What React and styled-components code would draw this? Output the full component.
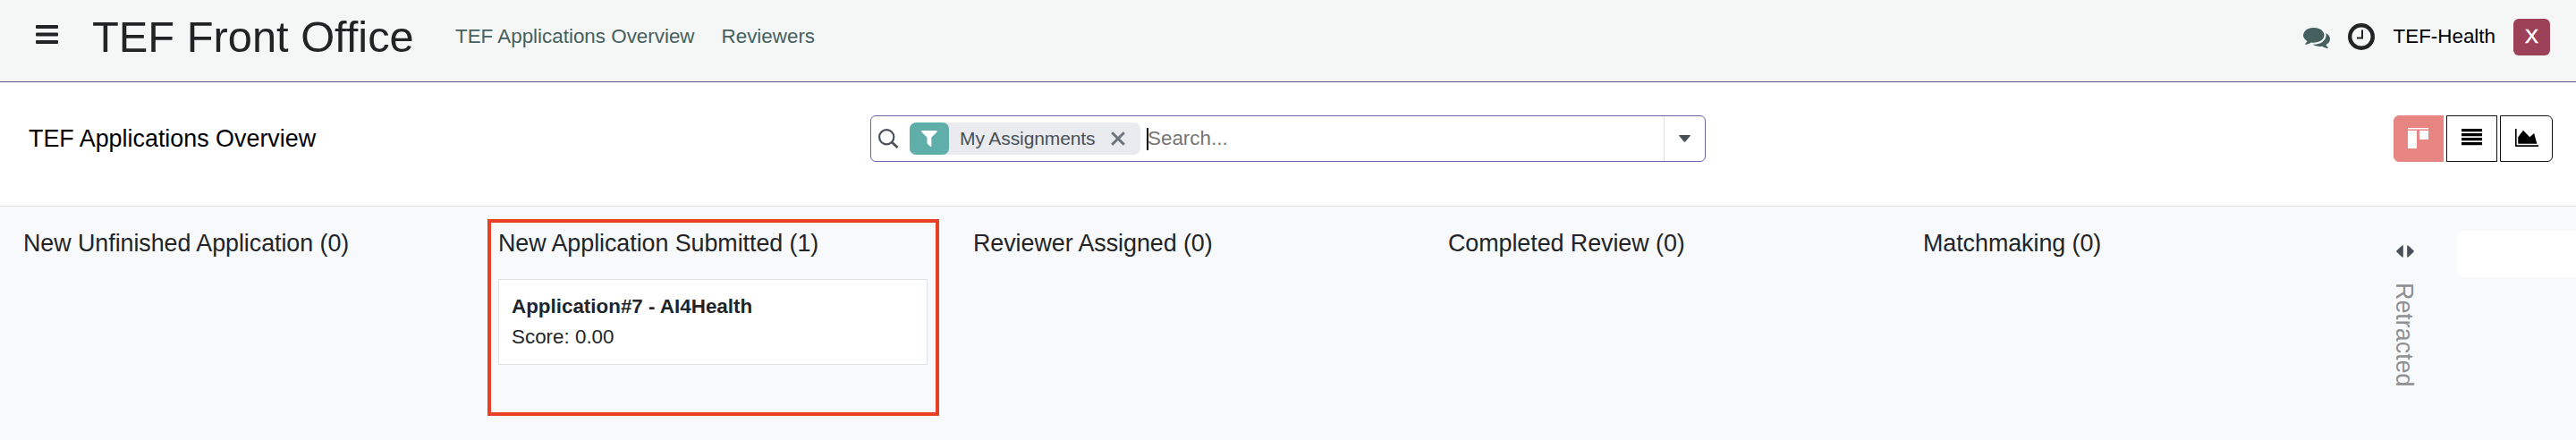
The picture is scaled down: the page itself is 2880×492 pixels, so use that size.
import React from "react";
import styled, { createGlobalStyle, css } from "styled-components";

const GlobalStyle = createGlobalStyle`
  *, *::before, *::after { box-sizing: border-box; }
  html, body { margin: 0; padding: 0; }
  body {
    background: #f8f9fb;
    font-family: "Liberation Sans", Arial, sans-serif;
    font-size: 22.4px;
    line-height: 34px;
    color: #212529;
    overflow: hidden;
    -webkit-font-smoothing: antialiased;
  }
`;

const Page = styled.div`
  display: flex;
  flex-direction: column;
  width: 2880px;
  height: 492px;
  overflow: hidden;
  white-space: nowrap;
`;

const Icon = styled.svg`
  display: block;
  flex: none;
  width: ${(p) => p.$w}px;
  height: ${(p) => p.$h}px;
  fill: currentColor;
`;

const NavBar = styled.header`
  display: flex;
  align-items: flex-start;
  height: 92px;
  padding: 0 29px 0 40px;
  background: #f4f7f6;
  border-bottom: 1px solid #5b5184;
`;

const MenuToggle = styled.div`
  margin-top: 28px;
  color: #212424;
`;

const Brand = styled.div`
  flex: none;
  margin: 12px 0 0 38px;
  width: 406px;
  font-size: 48.8px;
  line-height: 58px;
  color: #212424;
`;

const NavLinks = styled.nav`
  display: flex;
  gap: 30px;
  margin-top: 24px;
  color: #466060;
`;

const NavLink = styled.span``;

const SysTray = styled.div`
  display: flex;
  margin-left: auto;
`;

const TrayItem = styled.div`
  margin: ${(p) => p.$top}px ${(p) => p.$right}px 0 0;
  color: ${(p) => p.$color};
`;

const Avatar = styled.div`
  width: 41px;
  height: 41px;
  margin-top: 21px;
  border-radius: 6px;
  background: #9d4159;
  color: #fff;
  line-height: 40px;
  text-align: center;
  -webkit-text-stroke: 0.5px #fff;
`;

const ControlPanel = styled.section`
  display: flex;
  align-items: flex-start;
  height: 139px;
  padding: 37px 26px 0 32px;
  background: #fff;
  border-bottom: 1px solid #dee2e6;
`;

const Breadcrumb = styled.div`
  width: 941px;
  margin-top: 9px;
  font-size: 26.88px;
  color: #000;
`;

const SearchBox = styled.div`
  display: flex;
  align-items: center;
  width: 934px;
  height: 52px;
  padding-left: 8px;
  border: 1px solid #71639e;
  border-radius: 6px;
  color: #495057;
`;

const Facet = styled.div`
  display: flex;
  align-items: center;
  width: 258px;
  height: 36px;
  margin: 0 7px 0 12px;
  border-radius: 7px;
  background: #e9ebef;
`;

const FacetIcon = styled.div`
  display: flex;
  align-items: center;
  justify-content: center;
  width: 44px;
  height: 36px;
  border-radius: 7px;
  background: #60aeaa;
  color: #fff;
`;

const FacetLabel = styled.span`
  flex: none;
  width: 181px;
  padding-left: 12px;
  font-size: 21px;
  letter-spacing: -0.1px;
`;

const Remove = styled.span`
  color: #6c757d;
`;

const SearchInput = styled.div`
  flex: 1;
  display: flex;
  align-items: center;
  color: #757575;
`;

const TextCursor = styled.span`
  width: 2px;
  height: 25px;
  margin-right: -1px;
  background: #000;
`;

const SearchToggle = styled.div`
  display: flex;
  align-items: center;
  justify-content: center;
  width: 46px;
  height: 50px;
  border-left: 1px solid #dee2e6;
`;

const ViewSwitch = styled.div`
  display: flex;
  gap: 3px;
  margin-left: auto;
`;

const ViewButton = styled.div`
  display: flex;
  align-items: center;
  justify-content: center;
  width: ${(p) => p.$w}px;
  height: 52px;
  padding-bottom: 2px;
  border: 1px solid #111;
  border-radius: ${(p) => p.$radius || "0"};
  color: #000;
  background: #fff;
  ${(p) => p.$active && css`
    padding: 0 1px 1px 0;
    background: #e78583;
    border-color: #e78583;
    color: #fff;
  `}
`;

const Board = styled.main`
  flex: 1;
  display: flex;
  align-items: flex-start;
  padding: 14px 0 0 14px;
  background: #f8f9fb;
`;

const Column = styled.section`
  width: 505px;
  height: 220px;
  margin-right: 26px;
  padding: 6px 8px 0;
  border: 4px solid ${(p) => (p.$marked ? "#ea4025" : "transparent")};
`;

const ColumnTitle = styled.div`
  height: 57px;
  font-size: 26.88px;
  line-height: 34px;
  letter-spacing: -0.06px;
`;

const Card = styled.article`
  width: 480px;
  height: 96px;
  padding: 13px 14px;
  background: #fff;
  border: 1px solid #dee2e6;
`;

const CardTitle = styled.div`
  font-weight: 700;
`;

const CardText = styled.div``;

const FoldedColumn = styled.section`
  display: flex;
  flex-direction: column;
  align-items: center;
  gap: 28px;
  width: 40px;
  padding-top: 29px;
  color: #495057;
`;

const FoldedTitle = styled.div`
  margin-right: 3px;
  writing-mode: vertical-rl;
  font-size: 26.88px;
  line-height: 30px;
  color: #8f9091;
`;

const AddColumn = styled.div`
  flex: 1;
  height: 52px;
  margin: 13px 0 0 38px;
  background: #fff;
  border-radius: 7px 0 0 7px;
`;

const columns = [
  { title: "New Unfinished Application (0)" },
  {
    title: "New Application Submitted (1)",
    marked: true,
    card: { title: "Application#7 - AI4Health", text: "Score: 0.00" },
  },
  { title: "Reviewer Assigned (0)" },
  { title: "Completed Review (0)" },
  { title: "Matchmaking (0)" },
];

export default function App() {
  return (
    <>
      <GlobalStyle />
      <Page>
        <NavBar>
          <MenuToggle>
            <Icon $w={25} $h={21} viewBox="0 0 25 21">
              <rect width="25" height="4" rx="1" />
              <rect y="8.4" width="25" height="4" rx="1" />
              <rect y="17" width="25" height="4" rx="1" />
            </Icon>
          </MenuToggle>
          <Brand>TEF Front Office</Brand>
          <NavLinks>
            <NavLink>TEF Applications Overview</NavLink>
            <NavLink>Reviewers</NavLink>
          </NavLinks>
          <SysTray>
            <TrayItem $top={31} $right={20} $color="#466060">
              <Icon $w={30} $h={23} viewBox="0 256 1792 1408" preserveAspectRatio="none">
                <path d="M1408 768q0 139-94 257t-256.5 186.5-353.5 68.5q-86 0-176-16-124 88-278 128-36 9-86 16h-3q-11 0-20.5-8t-11.5-21q-1-3-1-6.5t.5-6.5 2-6l2.5-5 3.5-5.5 4-5 4.5-5 4-4.5q5-6 23-25t26-29.5 22.5-29 25-38.5 20.5-44q-124-72-195-177t-71-224q0-139 94-257t256.5-186.5 353.5-68.5 353.5 68.5 256.5 186.5 94 257zm384 256q0 120-71 224.5t-195 176.5q10 24 20.5 44t25 38.5 22.5 29 26 29.5 23 25q1 1 4 4.5t4.5 5 4 5 3.5 5.5l2.5 5 2 6 .5 6.5-1 6.5q-3 14-13 22t-22 7q-50-7-86-16-154-40-278-128-90 16-176 16-271 0-472-132 58 4 88 4 161 0 309-45t264-129q125-92 192-212t67-254q0-77-23-152 129 71 204 174t75 230z" />
              </Icon>
            </TrayItem>
            <TrayItem $top={26} $right={21} $color="#212424">
              <Icon $w={30} $h={30} viewBox="0 0 30 30">
                <circle cx="15" cy="15" r="12.8" fill="none" stroke="currentColor" strokeWidth="4.4" />
                <path d="M16 7.5V16.5H10" fill="none" stroke="currentColor" strokeWidth="2" />
              </Icon>
            </TrayItem>
            <TrayItem $top={24} $right={20} $color="#000">TEF-Health</TrayItem>
            <Avatar>X</Avatar>
          </SysTray>
        </NavBar>

        <ControlPanel>
          <Breadcrumb>TEF Applications Overview</Breadcrumb>
          <SearchBox>
            <Icon $w={23} $h={22} viewBox="0 0 23 22">
              <circle cx="9.2" cy="9.2" r="8.1" fill="none" stroke="currentColor" strokeWidth="2.2" />
              <path d="M15 15L21.6 21" stroke="currentColor" strokeWidth="2.8" />
            </Icon>
            <Facet>
              <FacetIcon>
                <Icon $w={18} $h={18} viewBox="190 256 1426 1408" preserveAspectRatio="none">
                  <path d="M1595 295q17 41-14 70l-493 493v742q0 42-39 59-13 5-25 5-27 0-45-19l-256-256q-19-19-19-45v-486l-493-493q-31-29-14-70 17-39 59-39h1280q42 0 59 39z" />
                </Icon>
              </FacetIcon>
              <FacetLabel>My Assignments</FacetLabel>
              <Remove>
                <Icon $w={16} $h={16} viewBox="0 0 16 16">
                  <path d="M1.2 1.2L14.8 14.8M14.8 1.2L1.2 14.8" stroke="currentColor" strokeWidth="3" />
                </Icon>
              </Remove>
            </Facet>
            <SearchInput>
              <TextCursor />
              Search...
            </SearchInput>
            <SearchToggle>
              <Icon $w={13} $h={8} viewBox="0 0 13 8">
                <path d="M0.7 0h11.6q.9.3.4 1.1L7.2 7.4q-.7.7-1.4 0L.3 1.1Q-.2.3.7 0z" />
              </Icon>
            </SearchToggle>
          </SearchBox>
          <ViewSwitch>
            <ViewButton $active $w={56} $radius="6px 0 0 6px">
              <Icon $w={23} $h={23} viewBox="0 0 23 23">
                <path d="M0 0h23v1.6H0zM0 3h10v20H0zM13 3h10v10H13z" />
              </Icon>
            </ViewButton>
            <ViewButton $w={57}>
              <Icon $w={23} $h={20} viewBox="0 0 23 20">
                <path d="M0 0h23v3.3H0zM0 5h23v3.3H0zM0 10h23v3.3H0zM0 15h23v3.3H0z" />
              </Icon>
            </ViewButton>
            <ViewButton $w={59} $radius="0 6px 6px 0">
              <Icon $w={26} $h={20} viewBox="0 128 2048 1536" preserveAspectRatio="none">
                <path d="M2048 1536v128h-2048v-1536h128v1408h1920zm-384-1024l256 896h-1664v-576l448-576 576 576z" />
              </Icon>
            </ViewButton>
          </ViewSwitch>
        </ControlPanel>

        <Board>
          {columns.map((c) => (
            <Column key={c.title} $marked={c.marked}>
              <ColumnTitle>{c.title}</ColumnTitle>
              {c.card && (
                <Card>
                  <CardTitle>{c.card.title}</CardTitle>
                  <CardText>{c.card.text}</CardText>
                </Card>
              )}
            </Column>
          ))}
          <FoldedColumn>
            <Icon $w={20} $h={14} viewBox="0 0 20 14">
              <path d="M7.8.8v12.4q-.4.9-1.2.4L.5 7.7Q-.1 7 .5 6.3L6.6.4q.8-.5 1.2.4zM12.2.8v12.4q.4.9 1.2.4l6.1-5.9q.6-.7 0-1.4L13.4.4q-.8-.5-1.2.4z" />
            </Icon>
            <FoldedTitle>Retracted</FoldedTitle>
          </FoldedColumn>
          <AddColumn />
        </Board>
      </Page>
    </>
  );
}
